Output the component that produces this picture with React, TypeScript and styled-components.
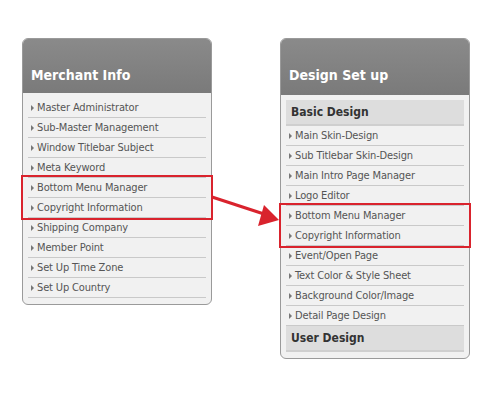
import styled, { createGlobalStyle } from "styled-components";

const GlobalStyle = createGlobalStyle`
  html, body {
    margin: 0;
    padding: 0;
    background: #ffffff;
  }
  body {
    font-family: "DejaVu Sans Condensed", "DejaVu Sans", sans-serif;
  }
`;

const leftItems = [
  "Master Administrator",
  "Sub-Master Management",
  "Window Titlebar Subject",
  "Meta Keyword",
];
const leftMarked = ["Bottom Menu Manager", "Copyright Information"];
const leftRest = [
  "Shipping Company",
  "Member Point",
  "Set Up Time Zone",
  "Set Up Country",
];

const rightItems = [
  "Main Skin-Design",
  "Sub Titlebar Skin-Design",
  "Main Intro Page Manager",
  "Logo Editor",
];
const rightMarked = ["Bottom Menu Manager", "Copyright Information"];
const rightRest = [
  "Event/Open Page",
  "Text Color & Style Sheet",
  "Background Color/Image",
  "Detail Page Design",
];

const PageStyled = styled.div`
  position: relative;
  width: 500px;
  height: 395px;
  display: flex;
  align-items: flex-start;
  gap: 68px;
  padding: 38px 0 0 22px;
  box-sizing: border-box;
`;

const PanelStyled = styled.div`
  width: 190px;
  box-sizing: border-box;
  border: 1px solid #9a9a9a;
  border-radius: 6px;
  background: #f1f1f1;
`;

const PanelHeaderStyled = styled.div<{ $height: number }>`
  height: ${(p) => p.$height}px;
  box-sizing: border-box;
  display: flex;
  align-items: flex-end;
  padding: 0 0 ${(p) => p.$height - 44}px 8px;
  background: linear-gradient(#8a8a8a, #7a7a7a);
  border-radius: 5px 5px 0 0;
  color: #ffffff;
  font-size: 14px;
  font-weight: bold;
`;

const ListStyled = styled.div`
  padding: 5px 5px 6px 5px;
`;

const ItemStyled = styled.div`
  height: 20px;
  box-sizing: border-box;
  border-bottom: 1px solid #c9c9c9;
  display: flex;
  align-items: center;
  gap: 3px;
  padding-left: 3px;
  color: #555555;
  font-size: 11px;
  letter-spacing: -0.15px;
  white-space: nowrap;
`;

const ArrowGlyph = styled.span`
  width: 0;
  height: 0;
  border-top: 3px solid transparent;
  border-bottom: 3px solid transparent;
  border-left: 3px solid #777777;
`;

const SectionStyled = styled.div`
  height: 26px;
  box-sizing: border-box;
  display: flex;
  align-items: center;
  padding-left: 5px;
  background: #dddddd;
  border-bottom: 2px solid #cfcfcf;
  color: #333333;
  font-size: 12px;
  font-weight: bold;
`;

const MarkedStyled = styled.div`
  position: relative;
  &::after {
    content: "";
    position: absolute;
    left: -7px;
    right: -7px;
    top: -3px;
    bottom: -2px;
    border: 2px solid #d9232d;
    pointer-events: none;
  }
`;

const ArrowSvg = styled.svg`
  position: absolute;
  left: 0;
  top: 0;
  pointer-events: none;
`;

const Item = ({ label }: { label: string }) => (
  <ItemStyled>
    <ArrowGlyph />
    {label}
  </ItemStyled>
);

const Items = ({ list }: { list: string[] }) => (
  <>
    {list.map((label) => (
      <Item key={label} label={label} />
    ))}
  </>
);

const App = () => {
  return (
    <PageStyled>
      <GlobalStyle />
      <PanelStyled>
        <PanelHeaderStyled $height={54}>Merchant Info</PanelHeaderStyled>
        <ListStyled>
          <Items list={leftItems} />
          <MarkedStyled>
            <Items list={leftMarked} />
          </MarkedStyled>
          <Items list={leftRest} />
        </ListStyled>
      </PanelStyled>
      <PanelStyled>
        <PanelHeaderStyled $height={56}>Design Set up</PanelHeaderStyled>
        <ListStyled>
          <SectionStyled>Basic Design</SectionStyled>
          <Items list={rightItems} />
          <MarkedStyled>
            <Items list={rightMarked} />
          </MarkedStyled>
          <Items list={rightRest} />
          <SectionStyled>User Design</SectionStyled>
        </ListStyled>
      </PanelStyled>
      <ArrowSvg width="500" height="395">
        <line x1="212" y1="197" x2="264" y2="214" stroke="#d9232d" strokeWidth="3" />
        <polygon points="279,220 258,226 264,205" fill="#d9232d" />
      </ArrowSvg>
    </PageStyled>
  );
};

export default App;
